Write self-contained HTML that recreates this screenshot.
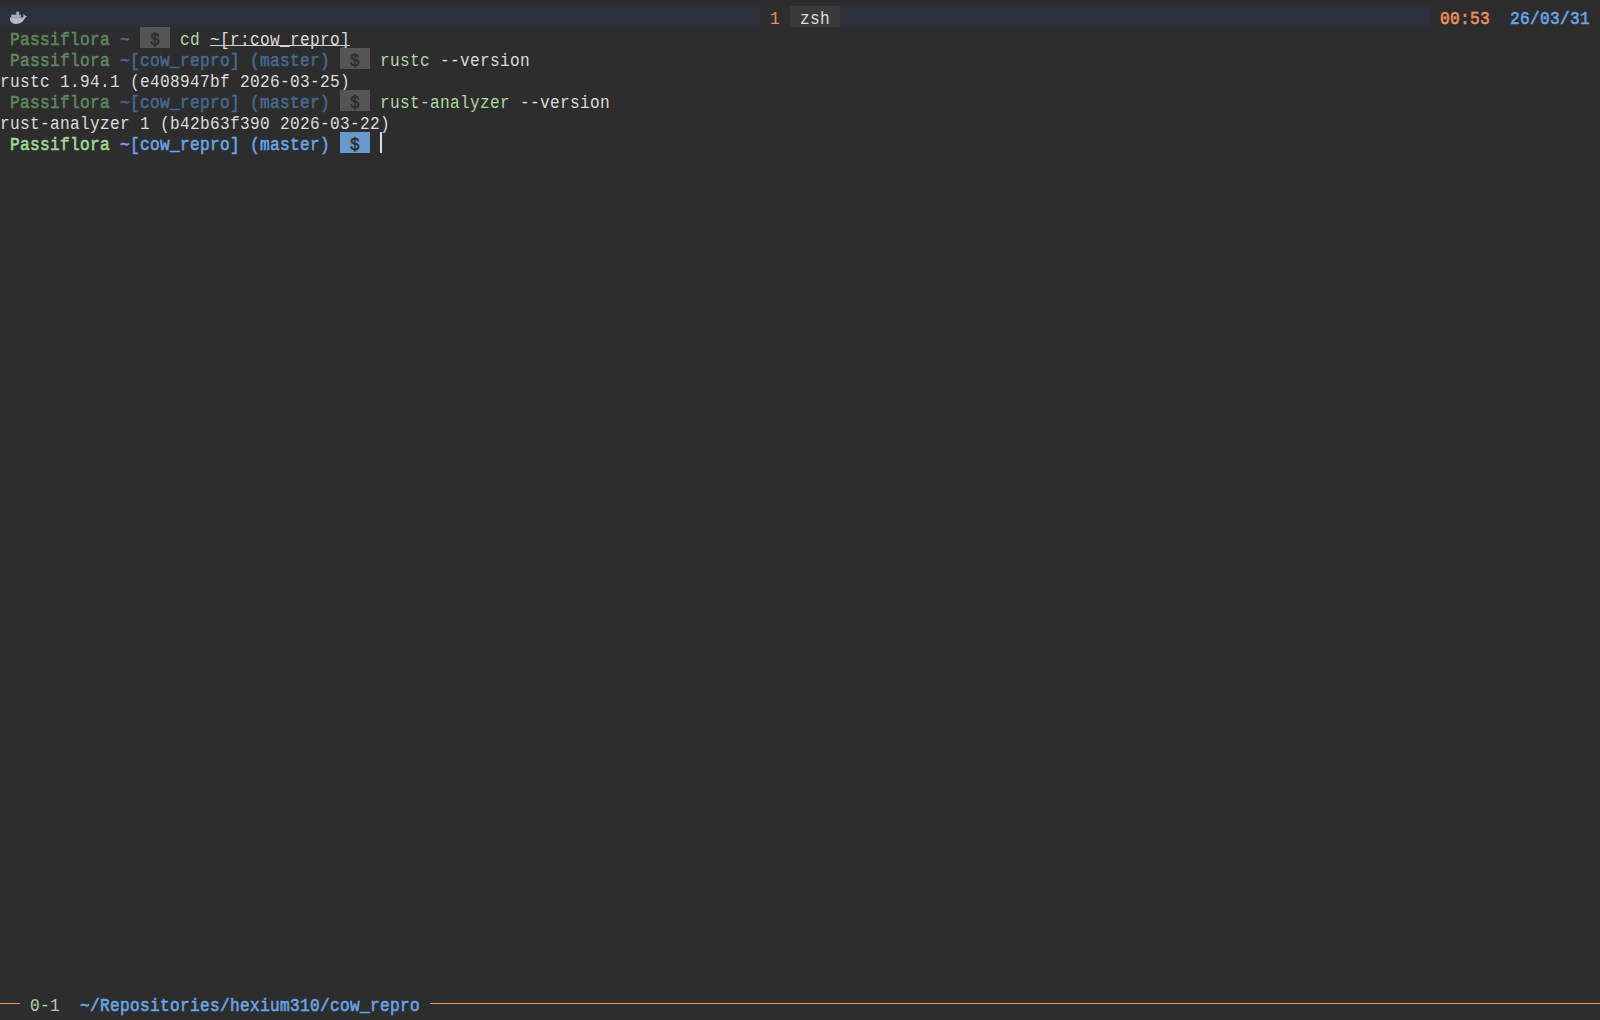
<!DOCTYPE html>
<html><head><meta charset="utf-8"><style>
html,body{margin:0;padding:0;}
body{width:1600px;height:1020px;background:#2d2d2d;position:relative;overflow:hidden;font-family:"Liberation Mono",monospace;}
.t{position:absolute;font-size:19px;line-height:21px;height:21px;letter-spacing:0.365px;white-space:pre;transform:scaleX(0.85);transform-origin:0 0;}
.b{position:absolute;}
</style></head><body>
<div class="b" style="left:0px;top:6px;width:760px;height:21px;background:#2b303b"></div>
<span class="t" style="left:770px;top:9px;color:#f0905a;">1</span>
<div class="b" style="left:790px;top:6px;width:50px;height:21px;background:#3a3a3a"></div>
<span class="t" style="left:800px;top:9px;color:#dcdcdc;">zsh</span>
<div class="b" style="left:840px;top:6px;width:590px;height:21px;background:#2b303b"></div>
<span class="t" style="left:1440px;top:9px;color:#f0905a;font-weight:normal;-webkit-text-stroke:0.6px currentColor;">00:53</span>
<span class="t" style="left:1510px;top:9px;color:#6aa5e6;font-weight:normal;-webkit-text-stroke:0.6px currentColor;">26/03/31</span>
<svg class="b" style="left:9px;top:11px" width="19" height="14" viewBox="0 0 19 14">
<path d="M0.8 6.5 L14.2 6.5 C14.5 5.5 14.3 4 14.5 3 C15.4 3.6 16 4.4 16.5 5 C17 5 17.5 5.1 18 5.3 C16.8 6.3 16.1 6.9 15.4 8 C14 10.6 11.5 12.9 7 12.9 C3 12.9 0.8 10.5 0.8 6.5 Z" fill="#b4b8c8"/>
<rect x="2.2" y="3.7" width="9.7" height="2.9" fill="#a9adbf"/>
<rect x="7.3" y="0.7" width="2.8" height="3.1" fill="#a9adbf"/>
</svg>
<span class="t" style="left:10px;top:30px;color:#5f875f;font-weight:normal;-webkit-text-stroke:0.6px currentColor;">Passiflora</span>
<span class="t" style="left:120px;top:30px;color:#46698f;font-weight:normal;-webkit-text-stroke:0.6px currentColor;">~</span>
<div class="b" style="left:140px;top:27px;width:30px;height:21px;background:#555555"></div>
<span class="t" style="left:150px;top:30px;color:#2d2d2d;font-weight:normal;-webkit-text-stroke:0.6px currentColor;">$</span>
<span class="t" style="left:180px;top:30px;color:#b0d8a4;">cd</span>
<span class="t" style="left:210px;top:30px;color:#dcdcdc;">~[r:cow_repro]</span>
<div class="b" style="left:210px;top:45px;width:140px;height:1px;background:#d0d0d0"></div>
<span class="t" style="left:10px;top:51px;color:#5f875f;font-weight:normal;-webkit-text-stroke:0.6px currentColor;">Passiflora</span>
<span class="t" style="left:120px;top:51px;color:#46698f;font-weight:normal;-webkit-text-stroke:0.6px currentColor;">~[cow_repro]</span>
<span class="t" style="left:250px;top:51px;color:#46698f;font-weight:normal;-webkit-text-stroke:0.6px currentColor;">(master)</span>
<div class="b" style="left:340px;top:48px;width:30px;height:21px;background:#555555"></div>
<span class="t" style="left:350px;top:51px;color:#2d2d2d;font-weight:normal;-webkit-text-stroke:0.6px currentColor;">$</span>
<span class="t" style="left:380px;top:51px;color:#b0d8a4;">rustc</span>
<span class="t" style="left:440px;top:51px;color:#dcdcdc;">--version</span>
<span class="t" style="left:0px;top:72px;color:#dcdcdc;">rustc 1.94.1 (e408947bf 2026-03-25)</span>
<span class="t" style="left:10px;top:93px;color:#5f875f;font-weight:normal;-webkit-text-stroke:0.6px currentColor;">Passiflora</span>
<span class="t" style="left:120px;top:93px;color:#46698f;font-weight:normal;-webkit-text-stroke:0.6px currentColor;">~[cow_repro]</span>
<span class="t" style="left:250px;top:93px;color:#46698f;font-weight:normal;-webkit-text-stroke:0.6px currentColor;">(master)</span>
<div class="b" style="left:340px;top:90px;width:30px;height:21px;background:#555555"></div>
<span class="t" style="left:350px;top:93px;color:#2d2d2d;font-weight:normal;-webkit-text-stroke:0.6px currentColor;">$</span>
<span class="t" style="left:380px;top:93px;color:#b0d8a4;">rust-analyzer</span>
<span class="t" style="left:520px;top:93px;color:#dcdcdc;">--version</span>
<span class="t" style="left:0px;top:114px;color:#dcdcdc;">rust-analyzer 1 (b42b63f390 2026-03-22)</span>
<span class="t" style="left:10px;top:135px;color:#a0dc98;font-weight:normal;-webkit-text-stroke:0.6px currentColor;">Passiflora</span>
<span class="t" style="left:120px;top:135px;color:#6aa5e6;font-weight:normal;-webkit-text-stroke:0.6px currentColor;">~[cow_repro]</span>
<span class="t" style="left:250px;top:135px;color:#6aa5e6;font-weight:normal;-webkit-text-stroke:0.6px currentColor;">(master)</span>
<div class="b" style="left:340px;top:132px;width:30px;height:21px;background:#6699cc"></div>
<span class="t" style="left:350px;top:135px;color:#2d2d2d;font-weight:normal;-webkit-text-stroke:0.6px currentColor;">$</span>
<div class="b" style="left:380px;top:132px;width:2px;height:21px;background:#dcdcdc"></div>
<div class="b" style="left:0;top:1003px;width:20px;height:1px;background:#f0905a"></div>
<span class="t" style="left:30px;top:996px;color:#b0d8a4;">0-1</span>
<span class="t" style="left:80px;top:996px;color:#6aa5e6;font-weight:normal;-webkit-text-stroke:0.6px currentColor;">~/Repositories/hexium310/cow_repro</span>
<div class="b" style="left:430px;top:1003px;width:1170px;height:1px;background:#f0905a"></div>
</body></html>
